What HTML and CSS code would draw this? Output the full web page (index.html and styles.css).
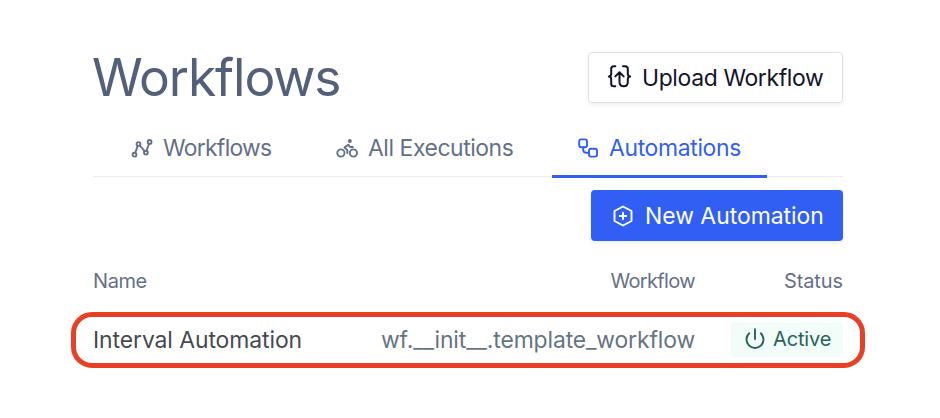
FILE: index.html
```html
<!DOCTYPE html>
<html lang="en">
<head>
<meta charset="utf-8">
<title>Workflows</title>
<link rel="stylesheet" href="styles.css">
</head>
<body>
<main class="page">
  <header class="header">
    <h1 class="title">Workflows</h1>
    <button class="button button-outline">
      <svg class="icon-upload" viewBox="0 0 25 25"><path d="M8.3 2.3H6.7Q4.2 2.3 4.2 4.8V9.8Q4.2 12.5 1.8 12.5Q4.2 12.5 4.2 15.2V19.7Q4.2 22.3 6.7 22.3H8.3M16 2.3H18Q20.8 2.3 20.8 4.8V9.8Q20.8 12.5 23.2 12.5Q20.8 12.5 20.8 15.2V18Q20.8 22.3 16.7 22.3Q12.5 22.3 12.5 18V8.5M8.3 12.4L12.5 8.2L16.7 12.4"/></svg>
      <span class="upload-label">Upload Workflow</span>
    </button>
  </header>
  <nav class="tabs">
    <a class="tab tab-workflows">
      <svg class="icon-tab" viewBox="0 0 22 22"><circle cx="3.5" cy="17.7" r="1.9"/><circle cx="7.5" cy="7" r="1.9"/><circle cx="14.9" cy="15.6" r="1.9"/><circle cx="18.6" cy="4.9" r="1.9"/><path d="M4.2 15.8L6.8 8.9M8.8 8.5L13.6 14.1M15.5 13.7L18 6.8"/></svg>
      <span>Workflows</span>
    </a>
    <a class="tab tab-executions">
      <svg class="icon-tab" viewBox="0 0 22 22"><circle cx="4.9" cy="16" r="3.6"/><circle cx="17.4" cy="16" r="3.6"/><circle class="solid" cx="13.8" cy="4" r="2"/><path d="M11.3 16V13L8.5 10.6L12.2 7.7L14 10H16.8"/></svg>
      <span>All Executions</span>
    </a>
    <a class="tab tab-automations active">
      <svg class="icon-tab" viewBox="0 0 22 22"><rect x="2.2" y="2.4" width="7.8" height="7.8" rx="2"/><rect x="12" y="11.8" width="8" height="7.8" rx="2"/><path d="M6.2 10.2V12.8Q6.2 15.7 9.1 15.7H12"/></svg>
      <span>Automations</span>
    </a>
  </nav>
  <div class="actions">
    <button class="button button-primary">
      <svg class="icon-plus" viewBox="0 0 22 22"><path d="M11 1.5L19.5 6V16L11 20.5L2.5 16V6ZM11 7.7V14.3M7.7 11H14.3"/></svg>
      <span class="new-label">New Automation</span>
    </button>
  </div>
  <div class="table">
    <div class="row head"><span class="col-name">Name</span><span class="col-workflow">Workflow</span><span class="col-status">Status</span></div>
    <div class="row item">
      <span class="name">Interval Automation</span>
      <span class="path">wf.__init__.template_workflow</span>
      <span class="badge"><svg class="icon-power" viewBox="0 0 22 22"><path d="M11 1.2V11M5.2 5.3A8.5 8.5 0 1 0 16.8 5.3"/></svg><span>Active</span></span>
    </div>
  </div>
</main>
</body>
</html>
```
FILE: styles.css
```css
* { box-sizing: border-box; }
body { margin: 0; background: #fff; color: #526079; font-family: Inter, "Liberation Sans", sans-serif; font-size: 22.9px; }
svg { flex: none; fill: none; stroke: currentColor; stroke-width: 1.9; stroke-linecap: round; stroke-linejoin: round; }
.page { width: 940px; height: 418px; padding: 52px 75px 0 71px; overflow: hidden; }
.header { display: flex; justify-content: space-between; height: 66px; margin: 0 22px; }
.title { margin: 0 0 0 -1px; font-size: 51.5px; font-weight: 400; line-height: 51px; letter-spacing: -1.1px; white-space: nowrap; }
.button { display: flex; align-items: center; height: 51px; padding: 0 0 0 19px; border: 0; border-radius: 4px; font: inherit; white-space: nowrap; box-shadow: 0 2px 4px rgba(0,0,0,.07); }
.button-outline { width: 255px; gap: 10px; padding-left: 18px; border: 1.4px solid #e0e1e8; background: #fff; color: #11142b; }
.upload-label { letter-spacing: -.35px; }
.icon-upload { width: 25px; height: 25px; stroke-width: 2; position: relative; top: -1px; }
.tabs { display: flex; gap: 13px; height: 60px; margin: 0 22px; padding-left: 13px; background: linear-gradient(#ebecee, #ebecee) 0 58px / 100% 1px no-repeat; }
.tab { display: flex; align-items: center; gap: 10px; height: 60px; padding: 0 0 0 25px; white-space: nowrap; color: #64708a; }
.tab-workflows { width: 192px; letter-spacing: -.7px; }
.tab-executions { width: 228px; letter-spacing: -.43px; }
.tab-automations { width: 215px; letter-spacing: -.33px; }
.active { color: #315ff3; border-bottom: 3px solid #315ff3; padding-top: 3px; }
.icon-tab { width: 22px; height: 22px; }
.solid { fill: currentColor; stroke: none; }
.actions { display: flex; justify-content: flex-end; margin: 12px 22px 0; }
.button-primary { width: 252px; gap: 11px; background: #315ff3; color: #fff; padding-left: 21px; }
.icon-plus { width: 22px; height: 22px; }
.table { padding-top: 21px; }
.row { display: grid; grid-template-columns: 1fr 330px 148px; align-items: center; }
.head { height: 37px; padding: 0 22px; margin-bottom: 13px; font-size: 20px; color: #64708a; }
.col-name { letter-spacing: -.4px; }
.col-workflow { letter-spacing: -.65px; }
.col-status { letter-spacing: -.1px; }
.col-workflow, .col-status, .path { text-align: right; }
.item { height: 56px; padding: 0 17px; border: 5px solid #e93f25; border-radius: 21px; white-space: nowrap; }
.name { color: #46494f; letter-spacing: -.07px; }
.path { color: #667482; letter-spacing: -.12px; }
.badge { display: flex; align-items: center; justify-self: end; gap: 7px; width: 112px; height: 35px; margin-bottom: 2px; padding-left: 13px; border-radius: 4px; background: #f2fcf9; color: #286359; font-size: 20px; letter-spacing: -.15px; }
.icon-power { width: 22px; height: 22px; }
```
